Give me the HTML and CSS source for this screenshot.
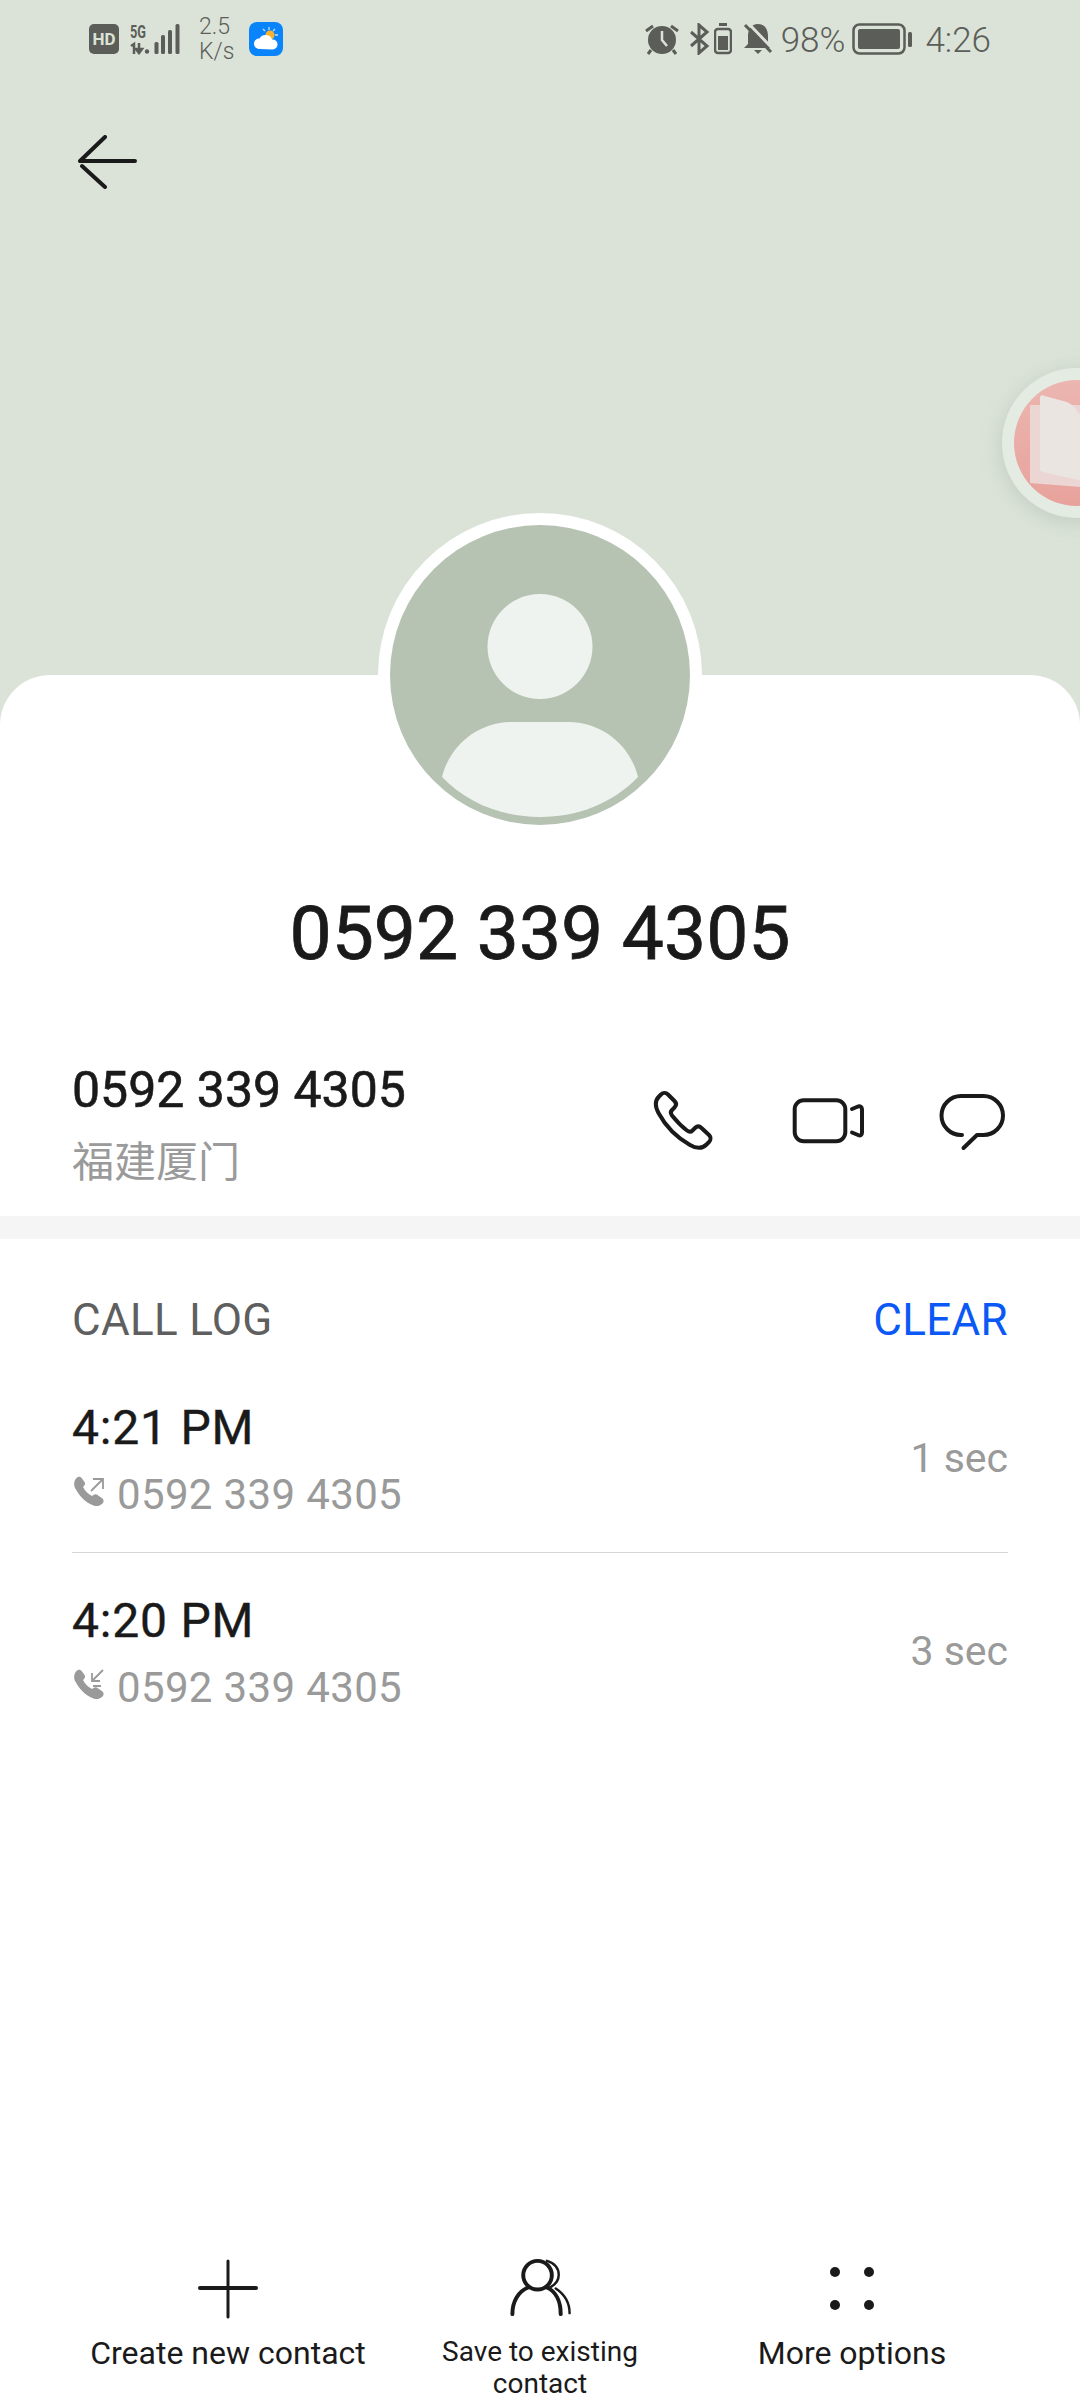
FILE: index.html
```html
<!DOCTYPE html>
<html lang="en">
<head>
<meta charset="utf-8">
<title>0592 339 4305</title>
<link rel="stylesheet" href="styles.css">
</head>
<body>
<div class="screen">
  <header class="hero">
    <div class="status">
      <div class="status-left">
        <span class="hd">HD</span>
        <svg class="sig" width="50" height="36" viewBox="0 -4 50 36">
          <text class="sig-5g" x="0" y="15" textLength="16" lengthAdjust="spacingAndGlyphs">5G</text>
          <path class="sig-net" d="M1 23l3-2v10M9 20v11M6 26h6l-3 4z"/>
          <circle class="sig-bar" cx="17" cy="28.500" r="2.200"/>
          <rect class="sig-bar" x="24.500" y="19" width="4" height="12" rx="1.500"/>
          <rect class="sig-bar" x="31" y="12" width="4" height="19" rx="1.500"/>
          <rect class="sig-bar" x="38" y="7" width="4" height="24" rx="1.500"/>
          <rect class="sig-bar" x="45.500" y="1" width="4" height="30" rx="1.500"/>
        </svg>
        <span class="speed">2.5<br>K/s</span>
        <svg class="weather" width="34" height="34" viewBox="0 0 34 34">
          <rect width="34" height="34" rx="8" fill="#0a84fb"/>
          <path d="M20 5v3M26 7l-2 2M29 13h-3M14 7l2 2" stroke="#bfe0ff" stroke-width="1.300" fill="none"/>
          <circle cx="21" cy="13" r="4.500" fill="#f7b32b"/>
          <path d="M11 27c-4 0-6-2.500-6-5.500 0-3 2.500-5 5.500-5 1.200-2.500 3.500-3.500 6-3.500 3.500 0 6 2 6.500 4.500 3.500 0 5.500 2 5.500 5 0 2.500-2 5-5.500 5z" fill="#fff"/>
        </svg>
      </div>
      <div class="status-right">
        <svg width="34" height="32" viewBox="0 0 34 32">
          <circle cx="17" cy="17" r="14" class="st-fill"/>
          <path d="M17 8v9l5 6" class="st-hand"/>
          <path d="M1 8l7-5M33 8l-7-5M6 27l-3 4M28 27l3 4" class="st-line"/>
        </svg>
        <svg class="st-bt" width="21" height="32" viewBox="0 0 21 32">
          <path d="M2 9l16 14-8 7V2l8 7L2 23" class="st-line"/>
        </svg>
        <svg class="st-minibat" width="18" height="32" viewBox="0 0 18 32">
          <path d="M5 1.500h8" class="st-line"/>
          <rect x="1" y="6" width="16" height="24" rx="3" class="st-outline"/>
          <rect x="4" y="13" width="10" height="14" class="st-solid"/>
        </svg>
        <svg class="st-bell" width="30" height="32" viewBox="0 0 30 32">
          <path d="M15 1c-7 0-10 6-10 12v8l-4 4h28l-4-4v-8C25 7 22 1 15 1z" class="st-solid"/>
          <path d="M11 27h8l-4 4z" class="st-solid"/>
          <path d="M5 0l26 27" class="st-gap"/>
          <path d="M2 2l26 27" class="st-line"/>
        </svg>
        <span class="st-text st-pct">98%</span>
        <svg class="st-bat" width="60" height="32" viewBox="0 0 60 32">
          <rect x="1.500" y="1.500" width="51" height="29" rx="6" class="st-outline"/>
          <rect x="6" y="6" width="42" height="20" rx="2" class="st-solid"/>
          <rect x="56" y="9" width="4" height="15" rx="1.500" class="st-solid"/>
        </svg>
        <span class="st-text st-time">4:26</span>
      </div>
    </div>
    <button class="back" type="button" aria-label="Back">
      <svg width="60" height="54" viewBox="0 0 60 54">
        <path d="M27 2L2 26h55M4 31l23 21" class="ic"/>
      </svg>
    </button>
  </header>

  <svg class="ball" width="150" height="150" viewBox="0 0 150 150">
    <defs>
      <linearGradient id="ballred" x1="0" y1="0" x2="0" y2="1">
        <stop offset="0" stop-color="#ecb6b0"/>
        <stop offset="1" stop-color="#e8a29c"/>
      </linearGradient>
    </defs>
    <circle cx="75" cy="75" r="75" fill="#e4ebe3"/>
    <circle cx="75" cy="75" r="63" fill="url(#ballred)"/>
    <path d="M28 37H79V119L28 115Z" fill="#ecd6d4"/>
    <path d="M38 30c0-2 1-3 3-2.500l22 6c6 2 10 5 12 10l4 4v65L41 104c-2-.500-3-1.500-3-3z" fill="#ebe5e2"/>
  </svg>

  <main class="card">
    <svg class="avatar" width="324" height="324" viewBox="0 0 324 324">
      <circle cx="162" cy="162" r="162" fill="#fff"/>
      <circle cx="162" cy="162" r="150" fill="#b6c3b3"/>
      <circle cx="162" cy="133.500" r="52.500" fill="#eff3ef"/>
      <path d="M64 264C72 232 100 209 134 209H190C224 209 252 232 260 264C235 290 200 304 162 304C124 304 89 290 64 264Z" fill="#eff3ef"/>
    </svg>

    <h1 class="title">0592 339 4305</h1>

    <section class="contact">
      <div class="contact-text">
        <div class="contact-num">0592 339 4305</div>
        <div class="contact-loc">福建厦门</div>
      </div>
      <div class="contact-actions">
        <svg width="72" height="72" viewBox="0 0 72 72">
          <path d="M13 9.500C15 7.500 18 7.500 20 9.500L26.500 16C28.500 18 28.500 20.500 26.500 22.500L24 25C22.500 26.500 22.500 28.500 24 30.500C28 35.500 33 41 39 45.500C41 47 43 47 44.500 45.500L47 43C49 41 51.500 41 53.500 43L61 50C63 52 63 55 61 57L58.500 59.500C54 64 48 63.500 42 60C28 52 18 42 10.500 28C7 21.500 7 15.500 11 11.500Z" class="ic"/>
        </svg>
        <svg width="72" height="72" viewBox="0 0 72 72">
          <rect x="2.700" y="15.300" width="50.600" height="41" rx="9" class="ic"/>
          <path d="M60 24L66 21.500C68.500 21 70 22 70 24.500V47.500C70 50 68.500 51 66 50L60 47.500" class="ic"/>
        </svg>
        <svg width="72" height="72" viewBox="0 0 72 72">
          <path d="M26 50H25A19.500 19.500 0 0 1 25 11H47.500A19.500 19.500 0 0 1 47.500 50H41L27.500 63" class="ic"/>
        </svg>
      </div>
    </section>

    <div class="band"></div>

    <section class="log">
      <div class="log-head">
        <span class="log-title">CALL LOG</span>
        <span class="log-clear">CLEAR</span>
      </div>
      <div class="log-row">
        <div class="log-main">
          <div class="log-time">4:21 PM</div>
          <div class="log-sub">
            <svg class="log-ic" width="36" height="36" viewBox="0 0 36 36">
              <path d="M4 4.500c2-2.500 4.500-2.500 6 0l2.500 3.500c1 1.500.500 2.500-.500 4l-1 1c2 4 5 7 9 9l1.500-1c1.500-1 3-1 4 0l5 3.500c1.500 1.500 1.500 3.500 0 5-2 2-5.500 3.500-9 2C12 28 7 21 3 14 1.500 10.500 2 7 4 4.500z" class="log-fill"/>
              <path d="M19 17L31 5M21 5h10v10" class="log-line"/>
            </svg>
            <span class="log-num">0592 339 4305</span>
          </div>
        </div>
        <div class="log-dur">1 sec</div>
      </div>
      <div class="log-row log-row-last">
        <div class="log-main">
          <div class="log-time">4:20 PM</div>
          <div class="log-sub">
            <svg class="log-ic" width="36" height="36" viewBox="0 0 36 36">
              <path d="M4 4.500c2-2.500 4.500-2.500 6 0l2.500 3.500c1 1.500.500 2.500-.500 4l-1 1c2 4 5 7 9 9l1.500-1c1.500-1 3-1 4 0l5 3.500c1.500 1.500 1.500 3.500 0 5-2 2-5.500 3.500-9 2C12 28 7 21 3 14 1.500 10.500 2 7 4 4.500z" class="log-fill"/>
              <path d="M31 3L20 14M20 6v8h8M21 19h8" class="log-line"/>
            </svg>
            <span class="log-num">0592 339 4305</span>
          </div>
        </div>
        <div class="log-dur">3 sec</div>
      </div>
    </section>

    <nav class="actions">
      <div class="action">
        <svg width="72" height="72" viewBox="0 0 72 72">
          <path d="M36 9v56" class="ic ic-thin"/>
          <path d="M8 36h56" class="ic"/>
        </svg>
        <span class="action-label">Create new contact</span>
      </div>
      <div class="action">
        <svg width="72" height="72" viewBox="0 0 72 72">
          <circle cx="33.500" cy="23.500" r="14.500" class="ic"/>
          <path d="M8 63C8 50 14 40 24 36M43 36C52 40 57 50 57 63" class="ic"/>
          <path d="M43 9C51 11 55 17 55 23C55 29 52 33 46 36M52 37C61 43 66 51 66 62" class="ic ic-fine"/>
        </svg>
        <span class="action-label action-label-small">Save to existing contact</span>
      </div>
      <div class="action">
        <svg width="72" height="72" viewBox="0 0 72 72">
          <circle cx="19" cy="20" r="5" class="dot"/>
          <circle cx="53" cy="20" r="5" class="dot"/>
          <circle cx="19" cy="53" r="5" class="dot"/>
          <circle cx="53" cy="53" r="5" class="dot"/>
        </svg>
        <span class="action-label">More options</span>
      </div>
    </nav>
  </main>
</div>
</body>
</html>
```
FILE: styles.css
```css
* { box-sizing: border-box; }
html, body { margin: 0; padding: 0; }
body { font-family: Roboto, "Noto Sans CJK SC", sans-serif; color: #1a1a1a; }

.screen {
  position: relative;
  width: 1080px;
  height: 2400px;
  overflow: hidden;
  background: #dbe3d8;
  display: flex;
  flex-direction: column;
}

.hero { height: 675px; flex: none; }

.status {
  display: flex;
  justify-content: space-between;
  align-items: center;
  height: 78px;
  padding: 0 89px;
  color: #5b5e58;
}
.status-left, .status-right { display: flex; align-items: center; }
.status-left { gap: 11px; }
.hd {
  width: 30px;
  height: 30px;
  border-radius: 5px;
  background: #5b5e58;
  color: #dbe3d8;
  font-size: 17px;
  font-weight: 700;
  line-height: 30px;
  text-align: center;
}
.sig { margin-top: -4px; }
.sig-5g { font-family: Roboto, sans-serif; font-size: 19px; font-weight: 700; fill: #5b5e58; }
.sig-net { fill: none; stroke: #5b5e58; stroke-width: 2.500; }
.sig-bar { fill: #5b5e58; }
.speed { margin-left: 8px; width: 37px; font-size: 23px; line-height: 25px; font-weight: 300; }
.weather { margin-left: 2px; }

.st-fill, .st-solid { fill: #5b5e58; }
.st-hand { fill: none; stroke: #dbe3d8; stroke-width: 2.500; }
.st-line { fill: none; stroke: #5b5e58; stroke-width: 3; }
.st-gap { fill: none; stroke: #dbe3d8; stroke-width: 3; }
.st-outline { fill: none; stroke: #5b5e58; stroke-width: 2.500; }
.st-bt { margin-left: 10px; }
.st-minibat { margin-left: 4px; }
.st-bell { margin-left: 11px; }
.st-text { margin-top: 4px; font-size: 35px; font-weight: 300; line-height: 40px; }
.st-pct { margin-left: 8px; }
.st-bat { margin-left: 7px; }
.st-time { margin-left: 13px; }

.back {
  display: block;
  margin: 57px 0 0 78px;
  padding: 0;
  border: 0;
  background: none;
  width: 60px;
  height: 54px;
}

.ic { fill: none; stroke: #1a1a1a; stroke-width: 4; stroke-linecap: round; stroke-linejoin: round; }
.ic-thin { stroke-width: 3; }
.ic-fine { stroke-width: 2.500; }
.dot { fill: #1a1a1a; }

.ball {
  position: absolute;
  top: 368px;
  right: -72px;
  filter: drop-shadow(0 4px 10px rgba(120, 135, 120, .25));
}

.card {
  position: relative;
  flex: 1;
  display: flex;
  flex-direction: column;
  background: #fff;
  border-radius: 50px 50px 0 0;
  padding-top: 213px;
}

.avatar { position: absolute; top: -162px; left: 378px; }

.title {
  margin: 0;
  height: 90px;
  font-size: 75px;
  font-weight: 400;
  -webkit-text-stroke: .8px #1a1a1a;
  line-height: 90px;
  text-align: center;
  color: #1a1a1a;
}

.contact {
  display: flex;
  justify-content: space-between;
  align-items: center;
  padding: 80px 72px 25px;
}
.contact-num { font-size: 50px; font-weight: 400; -webkit-text-stroke: .6px #1a1a1a; line-height: 64px; }
.contact-loc { margin-top: 13px; font-size: 42px; line-height: 56px; color: #9a9a9a; }
.contact-actions { display: flex; gap: 72px; margin-bottom: 8px; }

.band { height: 23px; flex: none; background: #f5f5f5; }

.log { padding: 57px 72px 0; }
.log-head { display: flex; justify-content: space-between; margin-bottom: 16px; line-height: 48px; font-size: 44px; letter-spacing: .3px; }
.log-title { color: #5f5f5f; }
.log-clear { color: #0a59f7; }
.log-row {
  display: flex;
  justify-content: space-between;
  align-items: center;
  padding: 38px 0 29px;
  border-bottom: 1px solid #d6d6d6;
}
.log-row-last { border-bottom: 0; }
.log-time { font-size: 48px; font-weight: 400; -webkit-text-stroke: .4px #1a1a1a; line-height: 60px; letter-spacing: .8px; }
.log-sub { display: flex; align-items: center; gap: 9px; margin-top: 9px; height: 56px; }
.log-ic { flex: none; margin-top: -7px; }
.log-fill { fill: #9a9a9a; }
.log-line { fill: none; stroke: #9a9a9a; stroke-width: 1.800; }
.log-num { font-size: 42px; line-height: 56px; letter-spacing: .35px; color: #9a9a9a; }
.log-dur { font-size: 41px; color: #9a9a9a; margin-bottom: 5px; }

.actions {
  margin-top: auto;
  display: grid;
  grid-template-columns: repeat(3, 312px);
  padding: 0 72px;
}
.action { display: flex; flex-direction: column; align-items: center; text-align: center; height: 148px; }
.action-label { margin-top: 13px; font-size: 32px; line-height: 32px; color: #1a1a1a; }
.action-label-small { margin-top: 13px; max-width: 230px; font-size: 28px; }
```
